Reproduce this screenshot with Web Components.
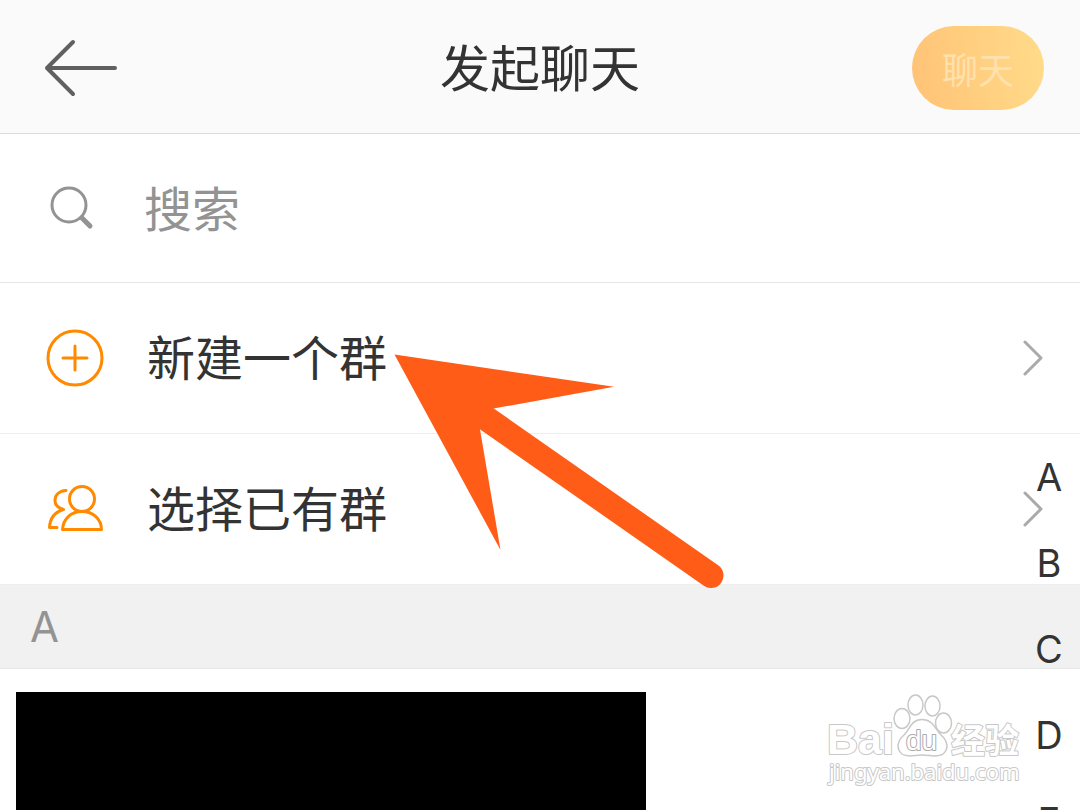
<!DOCTYPE html>
<html lang="zh-CN">
<head>
<meta charset="utf-8">
<meta name="viewport" content="width=device-width, initial-scale=1">
<title>发起聊天</title>
<style>
    body {
        margin: 0;
        font-family: "Noto Sans CJK SC", sans-serif;
        color: #333;
        background: #fff;
    }
</style>
</head>
<body>
<chat-page>
    <nav-bar slot="header" action="聊天">发起聊天</nav-bar>
    <search-row placeholder="搜索"></search-row>
    <menu-row>
        <svg slot="icon" width="60" height="60" viewBox="0 0 60 60" fill="none" stroke="#ff8a00" stroke-width="3" stroke-linecap="round">
            <circle cx="30" cy="30" r="27"/>
            <path d="M18 30h24M30 18v24"/>
        </svg>
        新建一个群
    </menu-row>
    <menu-row>
        <svg slot="icon" width="60" height="60" viewBox="0 0 60 60" fill="none" stroke="#ff8a00" stroke-width="3" stroke-linecap="round" stroke-linejoin="round">
            <circle cx="37" cy="20" r="12.5"/>
            <path d="M17.5 50.5C18 40 26 32.500 37 32.500S56.500 40 56.500 50.500Z"/>
            <path d="M21 11.500C14 12 10 16 10 21.500C10 26 13 29 18.500 30.500C10 33 5 39 4.500 48.500H12"/>
        </svg>
        选择已有群
    </menu-row>
    <section-title>A</section-title>
    <contact-block></contact-block>
    <index-bar slot="overlay" letters="ABCDE"></index-bar>
    <pointer-arrow slot="overlay"></pointer-arrow>
    <site-mark slot="overlay"></site-mark>
</chat-page>

<script>
customElements.define("chat-page", class extends HTMLElement {
    connectedCallback() {
        if (this.shadowRoot) return

        this.attachShadow({mode: "open"}).innerHTML = `
            <style>
                :host {
                    display: flex;
                    flex-direction: column;
                    position: relative;
                    height: 100vh;
                    overflow: hidden;
                }
                main {
                    flex: 1;
                    display: flex;
                    flex-direction: column;
                }
            </style>
            <slot name="header"></slot>
            <main><slot></slot></main>
            <slot name="overlay"></slot>
        `
    }
})

customElements.define("nav-bar", class extends HTMLElement {
    connectedCallback() {
        if (this.shadowRoot) return

        this.attachShadow({mode: "open"}).innerHTML = `
            <style>
                :host {
                    display: grid;
                    grid-template-columns: 1fr auto 1fr;
                    align-items: center;
                    padding: 2px 36px 0;
                    height: 131px;
                    background: #fafafa;
                    border-bottom: 1px solid #dcdcdc;
                }
                h1 {
                    margin: 0;
                    padding-bottom: 6px;
                    font-size: 50px;
                    line-height: 72px;
                    font-weight: 400;
                }
                button {
                    border: 0;
                    font-family: inherit;
                    cursor: pointer;
                }
                .back {
                    justify-self: start;
                    padding: 0 8px;
                    background: none;
                }
                .back svg {
                    display: block;
                }
                .action {
                    justify-self: end;
                    width: 132px;
                    height: 84px;
                    padding: 0;
                    border-radius: 42px;
                    font-size: 36px;
                    color: #ffe1ad;
                    background: linear-gradient(80deg, #ffc276, #ffdc8a);
                }
            </style>
            <button class="back" aria-label="返回">
                <svg width="74" height="58" viewBox="0 0 74 58" fill="none" stroke="#606060" stroke-width="4" stroke-linecap="round" stroke-linejoin="round">
                    <path d="M29 3L3 29L29 55M3 29H71"/>
                </svg>
            </button>
            <h1><slot></slot></h1>
            <button class="action"></button>
        `
        this.shadowRoot.querySelector(".action").textContent = this.getAttribute("action")
    }
})

customElements.define("search-row", class extends HTMLElement {
    connectedCallback() {
        if (this.shadowRoot) return

        this.attachShadow({mode: "open"}).innerHTML = `
            <style>
                :host {
                    display: block;
                    border-bottom: 1px solid #e6e6e6;
                }
                label {
                    display: flex;
                    align-items: center;
                    gap: 40px;
                    height: 148px;
                    padding: 0 44px;
                }
                svg {
                    flex: none;
                }
                input {
                    flex: 1;
                    min-width: 0;
                    padding: 0 0 4px;
                    border: 0;
                    outline: none;
                    height: 72px;
                    font-family: inherit;
                    font-size: 48px;
                    color: #333;
                    background: none;
                }
                input::placeholder {
                    color: #939393;
                    opacity: 1;
                }
            </style>
            <label>
                <svg width="60" height="60" viewBox="0 0 60 60" fill="none" stroke="#939393" stroke-linecap="round">
                    <circle cx="25" cy="27" r="17" stroke-width="3"/>
                    <path d="M38 40L46 48" stroke-width="5"/>
                </svg>
                <input type="search" aria-label="搜索">
            </label>
        `
        this.shadowRoot.querySelector("input").placeholder = this.getAttribute("placeholder")
    }
})

customElements.define("menu-row", class extends HTMLElement {
    connectedCallback() {
        if (this.shadowRoot) return

        this.attachShadow({mode: "open"}).innerHTML = `
            <style>
                :host {
                    display: block;
                    border-bottom: 1px solid #eee;
                }
                button {
                    display: flex;
                    align-items: center;
                    gap: 42px;
                    width: 100%;
                    height: 150px;
                    padding: 0 36px 0 45px;
                    border: 0;
                    font-family: inherit;
                    font-size: 48px;
                    line-height: 72px;
                    text-align: left;
                    color: inherit;
                    background: none;
                    cursor: pointer;
                }
                .label {
                    flex: 1;
                    padding-bottom: 6px;
                }
            </style>
            <button>
                <slot name="icon"></slot>
                <span class="label"><slot></slot></span>
                <svg width="22" height="36" viewBox="0 0 22 36" fill="none" stroke="#aaa" stroke-width="3" stroke-linecap="round" stroke-linejoin="round">
                    <path d="M3 2L19 18L3 34"/>
                </svg>
            </button>
        `
    }
})

customElements.define("section-title", class extends HTMLElement {
    connectedCallback() {
        if (this.shadowRoot) return

        this.attachShadow({mode: "open"}).innerHTML = `
            <style>
                :host {
                    display: block;
                    padding: 0 30px;
                    background: #f1f1f1;
                    border-bottom: 1px solid #e8e8e8;
                }
                h2 {
                    margin: 0;
                    font-family: Inter, sans-serif;
                    font-size: 42px;
                    line-height: 83px;
                    font-weight: 400;
                    color: #939393;
                }
            </style>
            <h2><slot></slot></h2>
        `
    }
})

// hidden contact entry
customElements.define("contact-block", class extends HTMLElement {
    connectedCallback() {
        if (this.shadowRoot) return

        this.attachShadow({mode: "open"}).innerHTML = `
            <style>
                :host {
                    flex: 1;
                    display: flex;
                    padding: 23px 16px 0;
                }
                div {
                    flex: 1;
                    max-width: 630px;
                    background: #000;
                }
            </style>
            <div></div>
        `
    }
})

customElements.define("index-bar", class extends HTMLElement {
    connectedCallback() {
        if (this.shadowRoot) return

        this.attachShadow({mode: "open"}).innerHTML = `
            <style>
                :host {
                    position: absolute;
                    top: 434px;
                    right: 11px;
                    width: 40px;
                    font-family: Inter, sans-serif;
                }
                nav {
                    display: flex;
                    flex-direction: column;
                }
                a {
                    font-size: 38px;
                    line-height: 86px;
                    text-align: center;
                    text-decoration: none;
                    color: inherit;
                }
            </style>
            <nav></nav>
        `
        const nav = this.shadowRoot.querySelector("nav")
        for (const letter of this.getAttribute("letters")) {
            const link = document.createElement("a")
            link.href = "#" + letter
            link.textContent = letter
            nav.append(link)
        }
    }
})

customElements.define("pointer-arrow", class extends HTMLElement {
    connectedCallback() {
        if (this.shadowRoot) return

        this.attachShadow({mode: "open"}).innerHTML = `
            <style>
                :host {
                    position: absolute;
                    top: 354px;
                    left: 394px;
                    pointer-events: none;
                }
                svg {
                    display: block;
                }
            </style>
            <svg width="332" height="236" viewBox="394 354 332 236">
                <path d="M394.500 354.500L614 386.700L493.500 408.500L480 429.500L500.500 550Z" fill="#ff5d17"/>
                <path d="M487 419L711 575.500" stroke="#ff5d17" stroke-width="25" stroke-linecap="round"/>
            </svg>
        `
    }
})

customElements.define("site-mark", class extends HTMLElement {
    connectedCallback() {
        if (this.shadowRoot) return

        this.attachShadow({mode: "open"}).innerHTML = `
            <style>
                :host {
                    position: absolute;
                    right: 52px;
                    bottom: 18px;
                    pointer-events: none;
                }
                svg {
                    display: block;
                }
                text {
                    font-family: "Liberation Sans", "Noto Sans CJK SC", sans-serif;
                    paint-order: stroke;
                }
                .url {
                    font-family: "Noto Sans", sans-serif;
                }
            </style>
            <svg width="204" height="100" viewBox="824 692 204 100" fill="#fff" stroke="#c8c8c8" stroke-width="2" stroke-linejoin="round">
                <text x="827" y="754" font-size="43" font-weight="700">Bai</text>
                <g stroke-width="1.500">
                    <ellipse cx="902" cy="718.500" rx="8" ry="10"/>
                    <ellipse cx="915.500" cy="705" rx="7.500" ry="10"/>
                    <ellipse cx="932.500" cy="706" rx="7.500" ry="10"/>
                    <ellipse cx="943.500" cy="723" rx="8" ry="10"/>
                    <path d="M922 719.500C933 719.500 935 729 941 735C948 741 949 749 943 754C937 758 930 755 922 755C914 755 908 758 902 754C896 749 897 741 904 735C910 729 911 719.500 922 719.500Z"/>
                </g>
                <text x="906" y="750" font-size="28" stroke="#aaa">du</text>
                <text x="951" y="753" font-size="34" font-weight="700">经验</text>
                <text class="url" x="829" y="780" font-size="22">jingyan.baidu.com</text>
            </svg>
        `
    }
})
</script>
</body>
</html>
